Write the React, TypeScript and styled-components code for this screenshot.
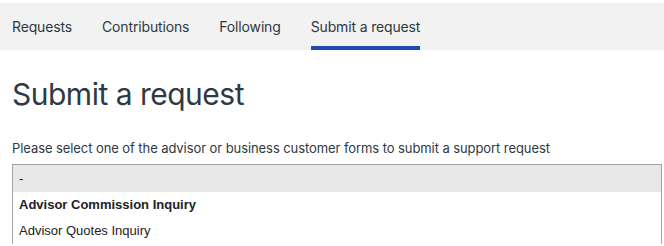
import React from "react";
import styled, { createGlobalStyle } from "styled-components";

const Global = createGlobalStyle`
  html, body { margin: 0; padding: 0; background: #fff; }
  body { font-family: Inter, "Noto Sans", sans-serif; color: #2f3941; }
`;

const Page = styled.div`
  padding-top: 3px;
  width: 664px;
`;

const Nav = styled.nav`
  display: flex;
  gap: 30px;
  height: 47px;
  padding: 0 12px;
  background: #f2f2f2;
`;

const Tab = styled.a<{ $active?: boolean }>`
  display: flex;
  align-items: center;
  font-size: 14px;
  letter-spacing: -0.15px;
  color: #2f3941;
  text-decoration: none;
  padding-top: 4px;
  border-bottom: 4px solid ${(p) => (p.$active ? "#1f4bb8" : "transparent")};
`;

const Main = styled.main`
  padding: 0 12px;
`;

const Title = styled.h1`
  margin: 26px 0 0;
  font-size: 30px;
  font-weight: 400;
  line-height: 36px;
  letter-spacing: -0.5px;
  color: #2f3941;
`;

const Lead = styled.p`
  margin: 27px 0 0;
  font-size: 13px;
  line-height: 18px;
  letter-spacing: -0.08px;
`;

const List = styled.ul`
  list-style: none;
  margin: 7px 0 0;
  padding: 0;
  width: 648px;
  border: 1px solid #a3a3a3;
  border-bottom: none;
  font-family: "Liberation Sans", Arial, sans-serif;
  font-size: 13px;
  color: #222;
`;

const Option = styled.li<{ $highlight?: boolean; $bold?: boolean }>`
  height: 26px;
  line-height: 26px;
  padding: 0 6px;
  background: ${(p) => (p.$highlight ? "#e8e8e8" : "#fff")};
  font-weight: ${(p) => (p.$bold ? 700 : 400)};
  &:first-child { height: 27px; line-height: 27px; }
`;

export default function App() {
  return (
    <>
      <Global />
      <Page>
        <Nav>
          <Tab href="#">Requests</Tab>
          <Tab href="#">Contributions</Tab>
          <Tab href="#">Following</Tab>
          <Tab href="#" $active>Submit a request</Tab>
        </Nav>
        <Main>
          <Title>Submit a request</Title>
          <Lead>Please select one of the advisor or business customer forms to submit a support request</Lead>
          <List>
            <Option $highlight>-</Option>
            <Option $bold>Advisor Commission Inquiry</Option>
            <Option>Advisor Quotes Inquiry</Option>
          </List>
        </Main>
      </Page>
    </>
  );
}
